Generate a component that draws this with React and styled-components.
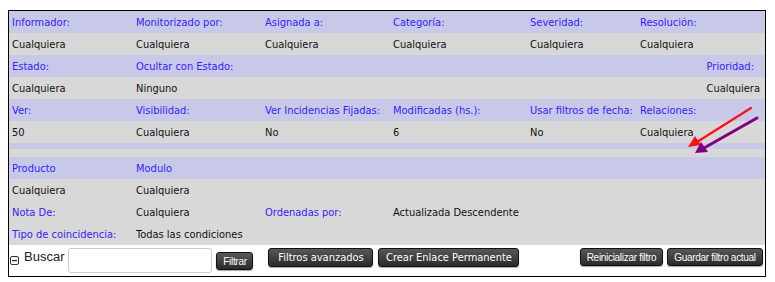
import styled, { createGlobalStyle } from "styled-components";

const GlobalStyle = createGlobalStyle`
  body {
    margin: 0;
    background: #fff;
    font-family: "DejaVu Sans Condensed", "DejaVu Sans", sans-serif;
    font-size: 11px;
  }
`;

const Page = styled.div`
  position: relative;
  width: 775px;
  height: 282px;
  padding: 10px 0 0 8px;
  box-sizing: border-box;
`;

const Frame = styled.div`
  width: 756px;
  border: 1px solid #000;
`;

const Row = styled.div`
  display: grid;
  grid-template-columns: 124px 129px 128px 137px 110px 1fr;
  height: 22px;
  align-items: center;
  background: ${(p) => (p.$tone === "head" ? "#c8c8e8" : "#d8d8d8")};
`;

const Cell = styled.div`
  padding: 0 3px;
  white-space: nowrap;
  color: ${(p) => (p.$label ? "#3322ff" : "#111")};
  text-align: ${(p) => (p.$right ? "right" : "left")};
  grid-column: ${(p) => p.$col || "auto"};
  ${(p) => p.$right && `padding-right: ${p.$pr ?? 5}px;`}
`;

const Spacer = styled.div`
  height: ${(p) => p.$h}px;
  background: ${(p) => (p.$tone === "head" ? "#c8c8e8" : "#d8d8d8")};
`;

const Footer = styled.div`
  display: flex;
  align-items: flex-start;
  height: 31px;
  padding: 0 2px 0 1px;
`;

const Toggle = styled.svg`
  margin-top: 11px;
  width: 9px;
  height: 9px;
`;

const SearchLabel = styled.span`
  margin: 4px 0 0 5px;
  font-family: "Liberation Sans", Arial, sans-serif;
  font-size: 13px;
  color: #222;
`;

const SearchInput = styled.input`
  margin: 3px 0 0 4px;
  width: 144px;
  height: 25px;
  box-sizing: border-box;
  border: 1px solid #cccccc;
  border-radius: 3px;
  background: #fff;
`;

const Button = styled.button`
  box-sizing: border-box;
  height: ${(p) => (p.$small ? 18 : 19)}px;
  margin-top: ${(p) => p.$top ?? 3}px;
  margin-left: ${(p) => p.$gap ?? 5}px;
  width: ${(p) => p.$w}px;
  padding: 0;
  border: 1px solid #111;
  border-radius: 3px;
  background: linear-gradient(#585858, #2a2a2a);
  box-shadow: 0 1px 1px rgba(0, 0, 0, 0.35);
  color: #fff;
  cursor: pointer;
  white-space: nowrap;
  font-family: ${(p) =>
    p.$small
      ? `"Liberation Sans", Arial, sans-serif`
      : `"DejaVu Sans Condensed", "DejaVu Sans", sans-serif`};
  font-size: ${(p) => (p.$small ? "10px" : "11px")};
  letter-spacing: ${(p) => (p.$small ? "-0.3px" : "0")};
`;

const Push = styled.div`
  flex: 1;
`;

const Arrows = styled.svg`
  position: absolute;
  left: 0;
  top: 0;
  pointer-events: none;
`;

const rows = [
  { tone: "head", cells: ["Informador:", "Monitorizado por:", "Asignada a:", "Categoría:", "Severidad:", "Resolución:"] },
  { tone: "body", cells: ["Cualquiera", "Cualquiera", "Cualquiera", "Cualquiera", "Cualquiera", "Cualquiera"] },
];

const App = () => {
  return (
    <Page>
      <GlobalStyle />
      <Frame>
        {rows.map((r, i) => (
          <Row key={i} $tone={r.tone}>
            {r.cells.map((c, j) => (
              <Cell key={j} $label={r.tone === "head"}>
                {c}
              </Cell>
            ))}
          </Row>
        ))}
        <Row $tone="head">
          <Cell $label>Estado:</Cell>
          <Cell $label>Ocultar con Estado:</Cell>
          <Cell $label $right $pr={11} $col="6">
            Prioridad:
          </Cell>
        </Row>
        <Row $tone="body">
          <Cell>Cualquiera</Cell>
          <Cell>Ninguno</Cell>
          <Cell $right $pr={5} $col="6">
            Cualquiera
          </Cell>
        </Row>
        <Row $tone="head">
          <Cell $label>Ver:</Cell>
          <Cell $label>Visibilidad:</Cell>
          <Cell $label>Ver Incidencias Fijadas:</Cell>
          <Cell $label>Modificadas (hs.):</Cell>
          <Cell $label>Usar filtros de fecha:</Cell>
          <Cell $label>Relaciones:</Cell>
        </Row>
        <Row $tone="body">
          <Cell>50</Cell>
          <Cell>Cualquiera</Cell>
          <Cell>No</Cell>
          <Cell>6</Cell>
          <Cell>No</Cell>
          <Cell>Cualquiera</Cell>
        </Row>
        <Spacer $tone="head" $h={6} />
        <Spacer $tone="body" $h={8} />
        <Row $tone="head">
          <Cell $label>Producto</Cell>
          <Cell $label>Modulo</Cell>
        </Row>
        <Row $tone="body">
          <Cell>Cualquiera</Cell>
          <Cell>Cualquiera</Cell>
        </Row>
        <Row $tone="body">
          <Cell $label>Nota De:</Cell>
          <Cell>Cualquiera</Cell>
          <Cell $label>Ordenadas por:</Cell>
          <Cell>Actualizada Descendente</Cell>
        </Row>
        <Row $tone="body">
          <Cell $label>Tipo de coincidencia:</Cell>
          <Cell>Todas las condiciones</Cell>
        </Row>
        <Footer>
          <Toggle viewBox="0 0 9 9">
            <rect x="0.5" y="0.5" width="8" height="8" rx="1.5" fill="#fff" stroke="#333" />
            <rect x="2" y="4" width="5" height="1.2" fill="#222" />
          </Toggle>
          <SearchLabel>Buscar</SearchLabel>
          <SearchInput type="text" />
          <Button $small $top={7} $gap={4} $w={37}>
            Filtrar
          </Button>
          <Button $gap={15} $w={105}>
            Filtros avanzados
          </Button>
          <Button $w={141}>Crear Enlace Permanente</Button>
          <Push />
          <Button $small $gap={0} $w={83}>
            Reinicializar filtro
          </Button>
          <Button $small $gap={4} $w={96}>
            Guardar filtro actual
          </Button>
        </Footer>
      </Frame>
      <Arrows width="775" height="282" viewBox="0 0 775 282">
        <line x1="751" y1="108" x2="697" y2="142" stroke="#ff1010" strokeWidth="2.2" strokeLinecap="round" />
        <polygon points="688,147 695,136 701,145" fill="#ff1010" />
        <line x1="757" y1="118" x2="704" y2="148" stroke="#800080" strokeWidth="3" strokeLinecap="round" />
        <polygon points="695,153 701,142 708,152" fill="#800080" />
      </Arrows>
    </Page>
  );
};

export default App;
